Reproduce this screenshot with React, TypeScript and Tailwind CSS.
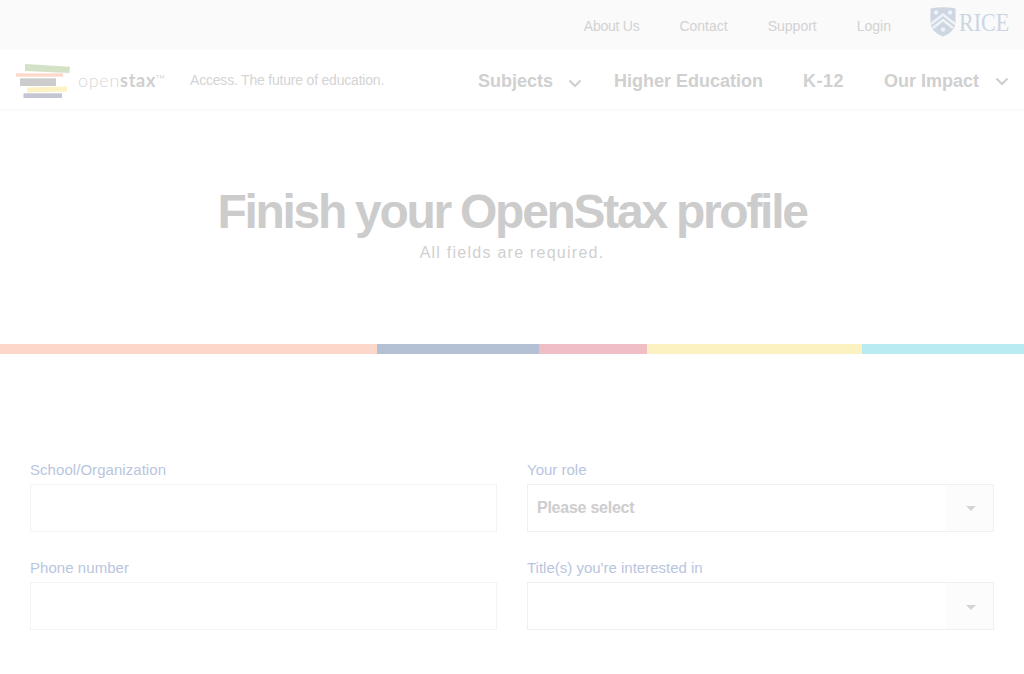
const sans = "font-['Liberation_Sans',Arial,sans-serif]";

function Chevron() {
  return (
    <svg width="14" height="9" viewBox="0 0 14 9" fill="none" className="block">
      <path d="M1.5 1.5 L7 7 L12.5 1.5" stroke="#cfcfcf" strokeWidth="2.2" />
    </svg>
  );
}

function Logo() {
  return (
    <svg width="54" height="34" viewBox="0 0 54 34" className="block">
      <polygon points="9,0 54,2.7 53.4,9 9,7" fill="#d3e2c7" />
      <rect x="0" y="9.3" width="47" height="3.4" fill="#fdd9cb" />
      <rect x="4" y="14.3" width="36" height="7.7" fill="#cccccc" />
      <polygon points="11,23.6 51,22.6 51,27.4 11.5,28.4" fill="#fdf2c3" />
      <rect x="7.5" y="29.3" width="38.5" height="4.7" fill="#c4c6d3" />
    </svg>
  );
}

function Shield() {
  return (
    <svg width="26" height="30" viewBox="0 0 26 30" className="block">
      <path d="M0.5 1.5 Q13 -1 25.5 1.5 L25.5 15 Q25 25 13 29.5 Q1 25 0.5 15 Z" fill="#cdd6e2" />
      <path d="M1 17 L13 7.5 L25 17 M3 21 L13 13 L23 21" stroke="#f0f3f6" strokeWidth="2.4" fill="none" />
      <circle cx="6" cy="5.5" r="2.2" fill="#eef1f5" />
      <circle cx="20" cy="5.5" r="2.2" fill="#eef1f5" />
      <circle cx="13" cy="22.5" r="2.2" fill="#eef1f5" />
    </svg>
  );
}

function SelectField({ label, value, arrowClass }: { label: string; value?: string; arrowClass?: string }) {
  return (
    <div className="flex flex-col">
      <label className="h-5 mb-1 text-[15px] leading-5 text-[#b9c5de]">{label}</label>
      <div className="flex h-12 border border-[#f0f0f0] bg-white">
        <div className="flex-1 flex items-center pl-[9px] text-[16px] tracking-[-0.25px] font-bold text-[#cdcdcd]">{value}</div>
        <div className="w-[47px] flex items-center justify-center bg-[#fcfcfc]">
          <div className={`w-0 h-0 ml-[2px] border-x-[5px] border-x-transparent border-t-[5px] border-t-[#d4d4d4] ${arrowClass ?? ""}`} />
        </div>
      </div>
    </div>
  );
}

function TextField({ label }: { label: string }) {
  return (
    <div className="flex flex-col">
      <label className="h-5 mb-1 text-[15px] leading-5 tracking-[0.05px] text-[#b9c5de]">{label}</label>
      <div className="h-12 border border-[#f3f3f3] bg-white" />
    </div>
  );
}

export default function App() {
  return (
    <div className={`${sans} h-[674px] overflow-hidden bg-white`}>
      <div className="h-[50px] bg-[#fafafa] flex items-center justify-end pr-[15px]">
        <nav className="flex items-center text-[14px] font-light text-[#d2d2d2] pt-[2px] mr-[39px]">
          <a className="tracking-[-0.25px]">About Us</a>
          <a className="ml-[40px]">Contact</a>
          <a className="ml-[40px]">Support</a>
          <a className="ml-[40px]">Login</a>
        </nav>
        <div className="flex items-center -mt-[6px]">
          <Shield />
          <div className="w-[50px] ml-[3px] mt-[1px]">
            <span className="block origin-left scale-x-[0.85] font-['Liberation_Serif',serif] text-[26px] leading-none text-[#cbd5e3]">RICE</span>
          </div>
        </div>
      </div>

      <header className="h-[61px] flex items-center justify-between pl-4 pr-[15px] pt-[2px] border-b-2 border-[#fafafa]">
        <div className="flex items-center">
          <Logo />
          <div className="ml-[8px] -mt-[1px] flex items-start text-[18px] tracking-[0.7px] leading-none text-[#cfcfcf] font-['Lato',sans-serif]">
            <span className="font-light text-[#d8d8d8]">open</span>
            <span className="font-bold">stax</span>
            <span className="text-[5px] font-normal mt-1">TM</span>
          </div>
          <span className="ml-[25px] text-[14px] tracking-[-0.2px] text-[#d4d4d4]">Access. The future of education.</span>
        </div>
        <nav className="flex items-center pt-[1px] text-[18px] font-bold text-[#d0d0d0]">
          <a>Subjects</a>
          <span className="ml-[15px] mt-1"><Chevron /></span>
          <a className="ml-[32px]">Higher Education</a>
          <a className="ml-[40px] tracking-[0.5px]">K-12</a>
          <a className="ml-[40px]">Our Impact</a>
          <span className="ml-[16px]"><Chevron /></span>
        </nav>
      </header>

      <section className="h-[233px] flex flex-col items-center pt-[75px]">
        <h1 className="text-[48px] leading-[52px] font-bold tracking-[-2.28px] [word-spacing:-1px] text-[#cccccc]">Finish your OpenStax profile</h1>
        <p className="text-[16px] leading-5 tracking-[1.25px] font-light text-[#d0d0d0] mt-[5px]">All fields are required.</p>
      </section>

      <div className="flex h-[10px]">
        <div className="w-[377px] bg-[#fdd7c9]" />
        <div className="w-[162px] bg-[#b4c0d4]" />
        <div className="w-[108px] bg-[#f0bec5]" />
        <div className="w-[215px] bg-[#fcf1c0]" />
        <div className="flex-1 bg-[#b9ecf2]" />
      </div>

      <form className="grid grid-cols-2 gap-x-[30px] gap-y-[26px] px-[30px] pt-[106px]">
        <TextField label="School/Organization" />
        <SelectField label="Your role" value="Please select" />
        <TextField label="Phone number" />
        <SelectField label="Title(s) you're interested in" arrowClass="mt-[2px]" />
      </form>
    </div>
  );
}
